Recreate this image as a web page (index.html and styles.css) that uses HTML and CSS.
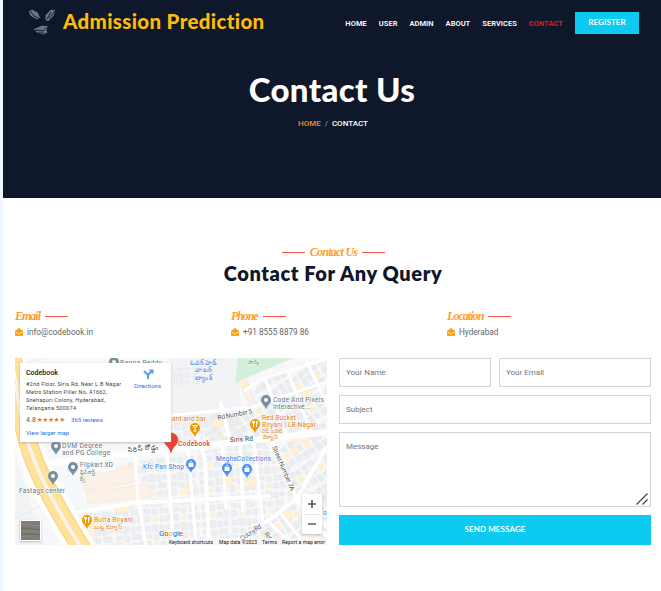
FILE: index.html
```html
<!DOCTYPE html>
<html lang="en">
<head>
<meta charset="utf-8">
<title>Admission Prediction - Contact</title>
<link rel="stylesheet" href="styles.css">
</head>
<body>
<div class="page">
  <header class="hero">
    <nav class="navbar">
      <a class="brand">
        <svg class="logo" viewBox="0 0 30 30">
          <g stroke="#060a14" stroke-width=".8">
            <path fill="#65718d" d="M1 4l4-2 6 3 3 7-4 1-7-4z"/><path d="M3 4l4 5 6 3M11 12l4 2"/>
            <path fill="#65718d" d="M18 8l6-6 5 1-2 6-6 6-3-2z"/><path d="M20 12l4-7M22 12l6-8M22 15l7 1"/>
            <path fill="#65718d" d="M6 22l9-4 7 1-2 4 1 3-5 2-7-2z"/><path d="M8 23l8 1 5-4M8 23v6M10 26l7 0"/>
          </g>
        </svg>
        <span class="brand-name">Admission Prediction</span>
      </a>
      <div class="links">
        <a>HOME</a><a>USER</a><a>ADMIN</a><a>ABOUT</a><a>SERVICES</a><a class="active">CONTACT</a>
      </div>
      <a class="register">REGISTER</a>
    </nav>
    <h1>Contact Us</h1>
    <div class="crumbs"><a>HOME</a><i>/</i><span>CONTACT</span></div>
  </header>

  <main>
    <div class="heading">
      <div class="script lined">Contact Us</div>
      <h2>Contact For Any Query</h2>
    </div>

    <div class="info">
      <div><div class="script email">Email</div><p><svg class="env" viewBox="0 0 16 16"><path d="M8 0L1 5Q0 6 0 7v7q0 2 2 2h12q2 0 2-2V7q0-1-1-2z"/><path class="flap" d="M2 8l4.500 3.500q1.500 1 3 0L14 8"/></svg><span>info@codebook.in</span></p></div>
      <div><div class="script phone">Phone</div><p><svg class="env" viewBox="0 0 16 16"><path d="M8 0L1 5Q0 6 0 7v7q0 2 2 2h12q2 0 2-2V7q0-1-1-2z"/><path class="flap" d="M2 8l4.500 3.500q1.500 1 3 0L14 8"/></svg><span>+91 8555 8879 86</span></p></div>
      <div><div class="script location">Location</div><p><svg class="env" viewBox="0 0 16 16"><path d="M8 0L1 5Q0 6 0 7v7q0 2 2 2h12q2 0 2-2V7q0-1-1-2z"/><path class="flap" d="M2 8l4.500 3.500q1.500 1 3 0L14 8"/></svg><span>Hyderabad</span></p></div>
    </div>

    <div class="columns">
      <div class="map">
        <svg viewBox="0 0 312 187" width="312" height="187">
          <defs>
            <pattern id="blocks" width="29" height="25" patternUnits="userSpaceOnUse" patternTransform="rotate(-4)">
              <path fill="#eceef0" stroke="#e2e4e8" stroke-width=".5" d="M2 2h5v5H2zM9 1h6v7H9zM17 2h4v6h-4zM2 10h6v4H2zM10 11h5v5h-5zM18 10h8v5h-8zM2 17h5v6H2zM17 18h5v5h-5zM24 17h4v6h-4zM23 2h4v4h-4z"/>
              <path fill="#fdf1d5" d="M10 18h5v5h-5z"/>
            </pattern>
            <pattern id="slant" width="23" height="27" patternUnits="userSpaceOnUse" patternTransform="rotate(-32)">
              <path fill="#eaecef" stroke="#e0e2e6" stroke-width=".5" d="M1 1h5v5H1zM8 1h6v5H8zM16 2h5v5h-5zM1 8h5v7H1zM8 8h4v6H8zM1 17h6v6H1zM9 17h5v7H9zM16 17h5v5h-5z"/>
              <path fill="#fdf0d0" d="M15 9h6v6h-6z"/>
            </pattern>
            <g id="pin"><path d="M0 8C-1 4-5 3-5-1a5 5 0 0 1 10 0C5 3 1 4 0 8z"/></g>
            <g id="dotpin"><use href="#pin"/><circle cy="-1" r="2" fill="#fff"/></g>
            <g id="foodpin"><use href="#pin"/><path fill="none" stroke="#fff" stroke-width="1" d="M-1.500-4v6M-2.500-4v2h2v-2M1.500 2v-6q2 1 0 4"/></g>
            <g id="barpin"><use href="#pin"/><path fill="none" stroke="#fff" stroke-width="1" d="M-2.500-3.500h5L0-1zM0-1v3M-1.500 2h3"/></g>
            <g id="shoppin"><use href="#pin"/><path fill="#fff" d="M-2.500-2h5v4h-5z"/><path fill="none" stroke="#fff" stroke-width=".8" d="M-1.200-2q0-2 1.200-2t1.200 2"/></g>
          </defs>
          <rect width="312" height="187" fill="#f7f8fa"/>
          <path fill="#f1f3f5" d="M0 100L30 187H0zM155 0h70v65h-70z"/>
          <path fill="url(#slant)" d="M248 18L312 0V72L195 84V55L230 52z"/>
          <path fill="url(#blocks)" d="M155 55L225 60 235 82 155 92zM110 105L250 84 282 143 220 187H70L60 152 120 143zM158 10h26v17h-26z"/>
          <path fill="url(#slant)" d="M262 85L312 77V187H225L283 140z"/>
          <path fill="#fcf1e6" stroke="#f8eadb" d="M65 119l55-10 2 14-52 10zM72 134l62-8 2 13-63 7zM57 158l13-5 12 28-8 6zM278 76l16-2v9l-16 2zM227 31l7-5 5 16-6 2zM102 108h22v8h-22z"/>
          <path fill="#d2efda" d="M223 0h55L220 25z"/>
          <g fill="#fff2d3" stroke="#f8e4b9" stroke-width=".5"><path d="M225 24l8-3v6l-8 3zM286 35l9-4 3 8-9 4zM276 89h7v6h-7zM208 118h9v9h-9zM233 120h8v8h-8zM265 157l8-6 5 8-8 6zM171 128h6v7h-6zM100 148l13-4 2 7-13 4zM74 163l12-3v8l-10 3zM197 61h10v8h-10z"/></g>
          <g fill="none" stroke="#fff" stroke-linejoin="round">
            <path stroke-width="6" d="M28 106L155 91 312 74"/>
            <path stroke-width="4" d="M58 155L120 145 236 139 256 138M215 187L260 158 283 139 295 117 312 89M180 70l10 31 4 86M257 84l24 55 31 30"/>
            <path stroke-width="3" d="M120 96l3 46 8 45M152 95l6 83M173 91l8 94M207 86l4 65M225 85l3 70M239 83l9 83M148 52l6 38M205 43l8 36M229 33l20-13 63-19M215 80l-9-35M249 18l23 60M272 12l25 64M292 4l20 43M230 51l82-27M140 59l102-10M254 164l24 23M266 156l24 30M280 142l32 37"/>
            <path stroke="#e4e7ea" stroke-width=".7" d="M150 70v18M214 159l-22 10M285 130l27 13M0 161l30-15M0 7l31-7"/>
          </g>
          <path fill="none" stroke="#fff" stroke-width="28" d="M-4-10Q5 70 21 107T69 194"/>
          <path fill="none" stroke="#f8cf78" stroke-width="19" d="M-4-10Q5 70 21 107T69 194"/>
          <path fill="none" stroke="#fee19a" stroke-width="17" d="M-4-10Q5 70 21 107T69 194"/>
          <path fill="none" stroke="#fff" stroke-width="3" d="M-4-10Q5 70 21 107T69 194"/>
          <path fill="none" stroke="#d8d4c7" stroke-width=".6" d="M-4-10Q5 70 21 107T69 194"/>

          <g class="labels">
            <g fill="#78909c"><use href="#dotpin" x="99" y="5"/><use href="#dotpin" x="41" y="89"/><use href="#dotpin" x="58" y="110"/><use href="#dotpin" x="38" y="119"/><use href="#dotpin" x="251" y="43"/></g>
            <g fill="#607783">
              <text x="105" y="7" textLength="42">Banga Reddy</text>
              <text x="47" y="90" textLength="40">DVM Degree</text><text x="47" y="97" textLength="48">and PG College</text>
              <text x="65" y="109" textLength="33">Flipkart XD</text><text class="te" x="65" y="116" textLength="15">ఫ్లిప్‌కార్ట్</text><text class="te" x="65" y="123">క్స్</text>
              <text x="4" y="135" textLength="46">Fastags center</text>
              <text x="258" y="44" textLength="51">Code And Pixels</text><text x="258" y="51" textLength="37">Interactive...</text>
            </g>
            <g fill="#f29900"><use href="#barpin" x="180" y="71"/><use href="#foodpin" x="240" y="67"/><use href="#foodpin" x="72" y="163"/></g>
            <g fill="#dc7a24">
              <text x="157" y="63" textLength="34">ant and bar</text>
              <text x="247" y="62" textLength="34">Red Bucket</text><text x="247" y="69" textLength="54">Biryani | LB Nagar</text><text class="te" x="247" y="75" textLength="20">రెడ్ బకెట్</text><text class="te" x="247" y="81" textLength="15">బిర్యానీ</text>
              <text x="79" y="164" textLength="39">Butta Biryani</text><text class="te" x="79" y="171" textLength="28">బుట్ట బిర్యానీ</text>
            </g>
            <g fill="#4a8df5"><use href="#shoppin" x="176" y="107"/><use href="#shoppin" x="212" y="111"/><use href="#shoppin" x="232" y="112"/></g>
            <g fill="#3975db">
              <text x="128" y="111" textLength="41">Kfc Pan Shop</text><text x="201" y="103" textLength="55">MeghaCollections</text>
              <text class="te big" x="175" y="7" textLength="27">ఓవర్ హెడ్</text><text class="te big" x="180" y="14" textLength="17">వాటర్</text><text class="te big" x="180" y="22" textLength="17">ట్యాంక్</text>
              <text x="308" y="157">o</text>
            </g>
            <text class="te" x="233" y="6" fill="#299b59" textLength="12">పార్క్</text>
            <g fill="#555b63">
              <text transform="translate(203 62) rotate(-11)" textLength="35">Rd Number 5</text><text class="dark" transform="translate(215 84) rotate(-3)" textLength="23">Siris Rd</text>
              <text class="te big dark" transform="translate(113 94) rotate(-5)" textLength="30">సిరిస్ రోడ్డు</text>
              <text transform="translate(257 89) rotate(67)" textLength="48">Street Number 7A</text><text transform="translate(227 183) rotate(-34)" textLength="24">Colony Rd</text><text transform="translate(249 176) rotate(55)">Rd</text>
            </g>
            <path fill="#ea4335" stroke="#c5221f" stroke-width=".4" d="M156 95c-1-6-7-8-7-13a7 7 0 0 1 14 0c0 5-6 7-7 13z"/>
            <text class="place" x="163" y="88" fill="#d63b3c" textLength="32">Codebook</text>
          </g>
          <text class="google" x="144" y="178" textLength="24"><tspan fill="#4285f4">G</tspan><tspan fill="#ea4335">o</tspan><tspan fill="#fbbc04">o</tspan><tspan fill="#4285f4">g</tspan><tspan fill="#34a853">l</tspan><tspan fill="#ea4335">e</tspan></text>
          <rect x="152" y="180" width="160" height="7" fill="#f7f7f7" opacity=".75"/>
          <g class="credits"><text x="154" y="186" textLength="44">Keyboard shortcuts</text><text x="204" y="186" textLength="38">Map data ©2023</text><text x="247" y="186" textLength="15">Terms</text><text x="267" y="186" textLength="43">Report a map error</text></g>
          <g class="shade"><rect x="5" y="162" width="21" height="21" fill="#fff"/></g><g><rect x="6" y="163" width="19" height="19" fill="#807c77"/><path stroke="#94857f" fill="none" d="M6 166l19 2M6 173h19M6 179l19-2"/><path stroke="#66705f" fill="none" d="M6 170l19 2M6 176l19 1"/></g>
          <g class="shade"><rect x="287" y="136" width="20" height="40" rx="1" fill="#fff"/></g>
          <path stroke="#e3e3e3" d="M290 156.500h14"/><path stroke="#5c5c5c" stroke-width="1.700" d="M293 146h8M297 142v8M293 166h8"/>
        </svg>
        <div class="card">
          <svg width="151" height="79" viewBox="0 0 151 79">
            <text x="6" y="12" class="name" textLength="32">Codebook</text>
            <g class="address"><text x="6" y="23" textLength="95">#2nd Floor, Siris Rd, Near L.B Nagar</text><text x="6" y="31" textLength="81">Metro Station Piller No, A1662,</text><text x="6" y="39" textLength="79">Snehapuri Colony, Hyderabad,</text><text x="6" y="47" textLength="50">Telangana 500074</text></g>
            <text x="6" y="59" class="rating" textLength="10">4.8</text><text x="17" y="59" class="stars" textLength="28" lengthAdjust="spacingAndGlyphs">★★★★★</text>
            <g class="bluelinks"><text x="51" y="59" textLength="32">365 reviews</text><text x="6" y="72" textLength="43">View larger map</text><text x="114" y="25" textLength="27">Directions</text></g>
            <path fill="none" stroke="#5b9ce6" stroke-width="2" d="M124 8l4 4M128 16v-4l4-4"/><path fill="#5b9ce6" d="M128.500 6.500h5v5z"/>
          </svg>
        </div>
      </div>

      <form>
        <div class="pair"><input placeholder="Your Name"><input placeholder="Your Email"></div>
        <input placeholder="Subject">
        <div class="message"><textarea placeholder="Message"></textarea><svg class="grip" viewBox="0 0 12 12"><path d="M.5 11.500L11.500.5M6.500 11.500l5-5"/></svg></div>
        <button type="button">SEND MESSAGE</button>
      </form>
    </div>
  </main>
</div>
</body>
</html>
```
FILE: styles.css
```css
* { box-sizing: border-box; }
body { margin: 0; background: #f0f8ff; font-family: Roboto, "Liberation Sans", sans-serif; font-size: 8px; color: #666565; overflow: hidden; }
.page { margin-left: 3px; height: 591px; background: #fff; }
.hero { height: 198px; background: #0f172b; color: #fff; }
.navbar { height: 44px; padding: 0 22px 0 24px; display: flex; align-items: center; }
.brand { display: flex; align-items: center; margin-right: auto; gap: 6px; }
.logo { width: 30px; height: 30px; fill: none; }
.brand-name { font: 900 20.500px/24px Lato, sans-serif; color: #fdbb0c; letter-spacing: .33px; margin-top: -3px; white-space: nowrap; }
.links { display: flex; gap: 12px; font-size: 7.500px; font-weight: 600; line-height: 12px; margin-top: 3px; letter-spacing: .04px; }
.links .active { color: #d9221f; }
.register { width: 64px; height: 22px; margin-left: 12px; margin-top: 1px; background: #0dcaf0; font: 700 8px/21px Lato, sans-serif; letter-spacing: .1px; text-align: center; }
h1 { margin: 21px 0 0; font: 900 33px/48px Lato, sans-serif; letter-spacing: .35px; text-align: center; }
.crumbs { display: flex; justify-content: center; gap: 4px; margin: 5px 0 0 2px; font-weight: 500; line-height: 12px; }
.crumbs a { color: #f28c28; }
.crumbs i { color: #8c96a8; font-style: normal; }
main { padding: 47px 10px 0 12px; }
.heading { text-align: center; }
.script { display: flex; align-items: center; gap: 5px; height: 14px; font: italic bold 12px/14px "Liberation Serif", serif; letter-spacing: -.75px; color: #ff9d2e; white-space: nowrap; }
.script::after, .lined::before { content: ""; width: 23px; height: 1px; background: #fe5444; }
.lined { justify-content: center; margin-left: 1px; }
.email { letter-spacing: -1px; }
.phone { letter-spacing: -1.100px; }
.location { letter-spacing: -.95px; }
h2 { margin: 0; font: 800 20px/28px Lato, sans-serif; letter-spacing: .6px; color: #0f172b; }
.info { display: grid; grid-template-columns: repeat(3, 216px); margin-top: 22px; }
.info p { display: flex; align-items: center; gap: 4px; margin: 3px 0 0; line-height: 12px; }
.info p span { font-size: 8.200px; }
.env { width: 8px; height: 8px; fill: #fea116; }
.env .flap { fill: none; stroke: #fff; stroke-width: 1.500; }
.columns { display: flex; gap: 12px; margin-top: 20px; }
.map { position: relative; width: 312px; height: 187px; overflow: hidden; }
.map svg { display: block; }
.map text { font-family: Roboto, "Noto Sans", sans-serif; }
.labels text { font-size: 6.700px; paint-order: stroke; stroke: #fff; stroke-width: 1px; }
.labels .te { font-size: 5.500px; }
.labels .big { font-size: 6.500px; }
.labels .dark { fill: #292d32; }
.labels .place { font-weight: 500; }
.map .google { font: 500 8px Roboto, sans-serif; stroke: #fff; stroke-width: 1px; paint-order: stroke; }
.credits text { font-size: 5px; fill: #111; }
.shade { filter: drop-shadow(0 1px 1px #9999); }
.card { position: absolute; left: 5px; top: 5px; width: 151px; height: 79px; background: #fff; box-shadow: 0 1px 2px #8888; }
.name { font-size: 7px; font-weight: 500; fill: #111; }
.address text { font-size: 5.500px; fill: #444; }
.rating { font-size: 7px; fill: #555; }
.map .stars { font-family: "DejaVu Sans", sans-serif; font-size: 7px; fill: #e7711b; }
.bluelinks text { font-size: 6px; fill: #1a73e8; }
form { width: 312px; display: flex; flex-direction: column; gap: 8px; }
.pair { display: grid; grid-template-columns: 1fr 1fr; gap: 8px; }
input, textarea { display: block; width: 100%; height: 29px; border: 1px solid #ced4da; border-radius: 0; padding: 0 6px; font: 8px Roboto, sans-serif; background: #fff; outline: 0; }
::placeholder { color: #6c757d; opacity: 1; }
.message { position: relative; height: 75px; }
textarea { height: 75px; padding-top: 9px; resize: none; overflow: hidden; }
.grip { position: absolute; right: 3px; bottom: 2px; width: 12px; height: 12px; fill: none; stroke: #444; stroke-width: 1.200; }
button { height: 30px; border: 0; background: #0dcaf0; color: #fff; font: 700 8px/28px Lato, sans-serif; letter-spacing: .1px; padding: 0 0 2px; }
```
